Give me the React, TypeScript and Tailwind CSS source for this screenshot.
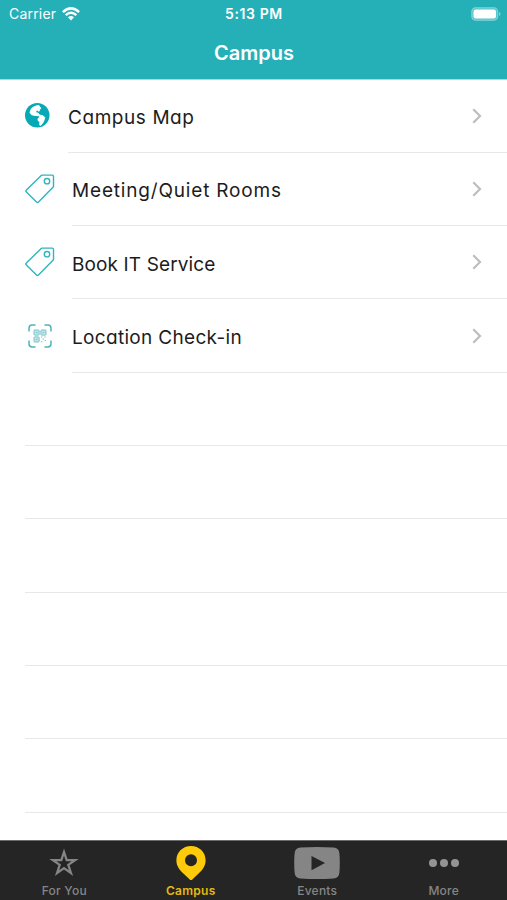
import type { ReactNode } from 'react';

interface MenuItem {
  label: string;
  icon: ReactNode;
  indent: string;
  tracking: string;
}

interface TabItem {
  label: string;
  icon: ReactNode;
  active?: boolean;
}

function GlobeIcon(): ReactNode {
  return (
    <svg viewBox="0 0 24 24" className="h-[24.5px] w-[24.5px]">
      <circle cx="12" cy="12" r="12" fill="#08a9b6" />
      <path
        d="M13.600 2.300Q8.500 3 6.200 5.700L4.900 9.300l1.500 2.200 3.400.7 3.300.2 1.500 1.300-1.900 1.700.3 2 1.600 1.300-.2 2.900 1.100.3 2.600-3.500 1.300-4.200-1.700-1.700-3.200-.6-1.800-2.100-2-.2-.3-1.600 1.800-.8 1.600.9.500-1.500 1.200-1.600-1.100-1.200Z"
        fill="#fff"
        stroke="#fff"
        strokeWidth=".9"
        strokeLinejoin="round"
      />
    </svg>
  );
}

function TagIcon(): ReactNode {
  return (
    <svg viewBox="0 0 30 30" className="h-[30px] w-[30px]" fill="none" stroke="#2fb5bf" strokeWidth="1.4" strokeLinejoin="round">
      <path d="M17 1.1h10.2q1.3 0 1.3 1.3v10.4L13.5 28q-1 1-2 0L1.4 18q-1-1 0-2L16 1.7Z" />
      <circle cx="22" cy="7.2" r="2.7" />
    </svg>
  );
}

function QrIcon(): ReactNode {
  return (
    <svg viewBox="0 0 24 24" className="h-6 w-6" fill="none" stroke="#4db4bb">
      <path d="M1 7V4.2Q1 1 4.2 1H7M17 1h2.8Q23 1 23 4.2V7M23 17v2.8q0 3.2-3.2 3.2H17M7 23H4.2Q1 23 1 19.8V17" strokeWidth="1.5" strokeLinecap="round" />
      <g fill="#c2e4e6" stroke="#79c3c8" strokeWidth="1">
        <rect x="6" y="6" width="5.1" height="5.1" rx=".7" />
        <rect x="12.9" y="6" width="5.1" height="5.1" rx=".7" />
        <rect x="6" y="12.9" width="5.1" height="5.1" rx=".7" />
      </g>
      <path d="M8 8.500h1.400M14.800 8.500h1.400M8 15.500h1.400M13 13h1.300m2.200 0h1.300M14.600 15h1.500m.6 1.600H18M12.800 17.800h1.600" stroke="#79c3c8" strokeWidth="1" />
    </svg>
  );
}

function StarIcon(): ReactNode {
  return (
    <svg viewBox="0 0 28 28" className="h-[30px] w-[30px]" fill="none" stroke="#858585" strokeWidth="2.1">
      <path d="m14 3.700 2.500 7.500h8l-6.500 4.600 2.500 7.600-6.500-4.700-6.500 4.700L10 15.800l-6.500-4.600h8Z" />
    </svg>
  );
}

function PinIcon(): ReactNode {
  return (
    <svg viewBox="0 0 30 34" className="h-[34px] w-[30px]">
      <path
        d="M15 0C6.800 0 .4 6.200.4 14.200c0 6 3.400 10.200 7.800 14.100l5.500 5.100q1.300 1.100 2.600 0l5.500-5.100c4.400-3.900 7.800-8.100 7.800-14.100C29.600 6.200 23.200 0 15 0Zm0 8.200a6 6 0 1 1 0 12 6 6 0 0 1 0-12Z"
        fill="#fecb0a"
        fillRule="evenodd"
      />
    </svg>
  );
}

function VideoIcon(): ReactNode {
  return (
    <svg viewBox="0 0 46 32" className="h-8 w-[46px]">
      <path d="M6.500.6Q23-.6 39.500.6q5.600.4 5.900 6 .8 9.400 0 18.800-.3 5.600-5.900 6-16.500 1.200-33 0-5.600-.4-5.900-6-.8-9.400 0-18.800.3-5.600 5.900-6Z" fill="#858585" />
      <path d="m17.500 9 13.500 7.100-13.500 7.100Z" fill="#252525" />
    </svg>
  );
}

function MoreIcon(): ReactNode {
  return (
    <svg viewBox="0 0 30 8" className="h-2 w-[30px]" fill="#949494">
      <circle cx="4" cy="4" r="4" />
      <circle cx="15" cy="4" r="4" />
      <circle cx="26" cy="4" r="4" />
    </svg>
  );
}

const MENU_ITEMS: MenuItem[] = [
  { label: 'Campus Map', icon: <GlobeIcon />, indent: 'ml-[68px]', tracking: 'tracking-[0.57px]' },
  { label: 'Meeting/Quiet Rooms', icon: <TagIcon />, indent: 'ml-[72px]', tracking: 'tracking-[0.82px]' },
  { label: 'Book IT Service', icon: <TagIcon />, indent: 'ml-[72px]', tracking: 'tracking-[0.12px]' },
  { label: 'Location Check-in', icon: <QrIcon />, indent: 'ml-[72px]', tracking: 'tracking-[0.32px]' },
];

const TABS: TabItem[] = [
  { label: 'For You', icon: <StarIcon /> },
  { label: 'Campus', icon: <PinIcon />, active: true },
  { label: 'Events', icon: <VideoIcon /> },
  { label: 'More', icon: <MoreIcon /> },
];

const EMPTY_ROWS = 6;

function StatusBar(): ReactNode {
  return (
    <div className="grid h-[27px] grid-cols-3 items-center pl-[7px] pr-[6px] text-[14px] leading-none">
      <div className="flex items-center gap-[6px] pl-[2px]">
        <span className="tracking-[0.2px]">Carrier</span>
        <svg viewBox="0 0 18 14" className="h-[14px] w-[18px]" fill="none" stroke="currentColor" strokeWidth="2.5">
          <path d="M.9 5.1q8.100-7.400 16.200 0M3.700 8.100q5.300-4.600 10.600 0" />
          <path d="M6 10.200q3-2.500 6 0L9 13.500Z" fill="currentColor" stroke="none" />
        </svg>
      </div>
      <span className="justify-self-center whitespace-nowrap text-[14px] font-semibold tracking-[0.6px]">5:13 PM</span>
      <svg viewBox="0 0 30 14" className="h-[14px] w-[30px] justify-self-end">
        <rect x=".7" y=".7" width="26" height="12.6" rx="3.8" fill="#fff" fillOpacity=".25" stroke="#fff" strokeOpacity=".3" strokeWidth="1.2" />
        <rect x="2.5" y="2.5" width="22.5" height="9" rx="2.2" fill="#fff" />
        <path d="M28 5v4q1.500-.6 1.500-2T28 5Z" fill="#fff" fillOpacity=".4" />
      </svg>
    </div>
  );
}

function MenuRow({ item }: { item: MenuItem }): ReactNode {
  return (
    <li className="grid h-[73.3px]">
      <div className="col-start-1 row-start-1 flex w-[54px] items-center pb-px pl-[25px]">
        <span className={item.label === 'Location Check-in' ? 'pl-[2.5px]' : ''}>{item.icon}</span>
      </div>
      <div className={`col-start-1 row-start-1 flex items-center justify-between border-b border-[#e8e8e8] pr-[25px] ${item.indent}`}>
        <span className={`pt-[5px] font-[Inter,sans-serif] text-[19px] text-[#1c1c1c] [font-feature-settings:'cv11'] ${item.tracking}`}>{item.label}</span>
        <svg viewBox="0 0 10 16" className="h-4 w-[10px]" fill="none" stroke="#bdbdbd" strokeWidth="2.2">
          <path d="m1.300 1.200 6.700 6.800-6.700 6.800" />
        </svg>
      </div>
    </li>
  );
}

export default function App(): ReactNode {
  return (
    <div className="flex h-[900px] w-[507px] flex-col overflow-hidden bg-white font-[Inter,sans-serif]">
      <header className="h-[79.6px] shrink-0 border-b border-[#a4dde0] bg-[#25b0b8] text-white">
        <StatusBar />
        <h1 className="pt-3 pl-px text-center text-[20px] leading-7 font-semibold">Campus</h1>
      </header>

      <ul className="min-h-0 flex-1 overflow-hidden">
        {MENU_ITEMS.map((item) => (
          <MenuRow key={item.label} item={item} />
        ))}
        {Array.from({ length: EMPTY_ROWS }, (_, index) => (
          <li key={index} className="ml-[25px] h-[73.3px] border-b border-[#e8e8e8]" />
        ))}
      </ul>

      <nav className="grid h-[60px] shrink-0 grid-cols-4 border-t border-[#6b6b6b] bg-[#252525] pl-px">
        {TABS.map((tab) => (
          <div key={tab.label} className={`flex flex-col items-center ${tab.active ? 'text-[#e5b90f]' : 'text-[#858585]'}`}>
            <div className="flex h-[43px] items-center justify-center">{tab.icon}</div>
            <span className={`text-[12px] leading-[13px] tracking-[0.25px] ${tab.active ? 'font-semibold' : 'font-medium'}`}>{tab.label}</span>
          </div>
        ))}
      </nav>
    </div>
  );
}
